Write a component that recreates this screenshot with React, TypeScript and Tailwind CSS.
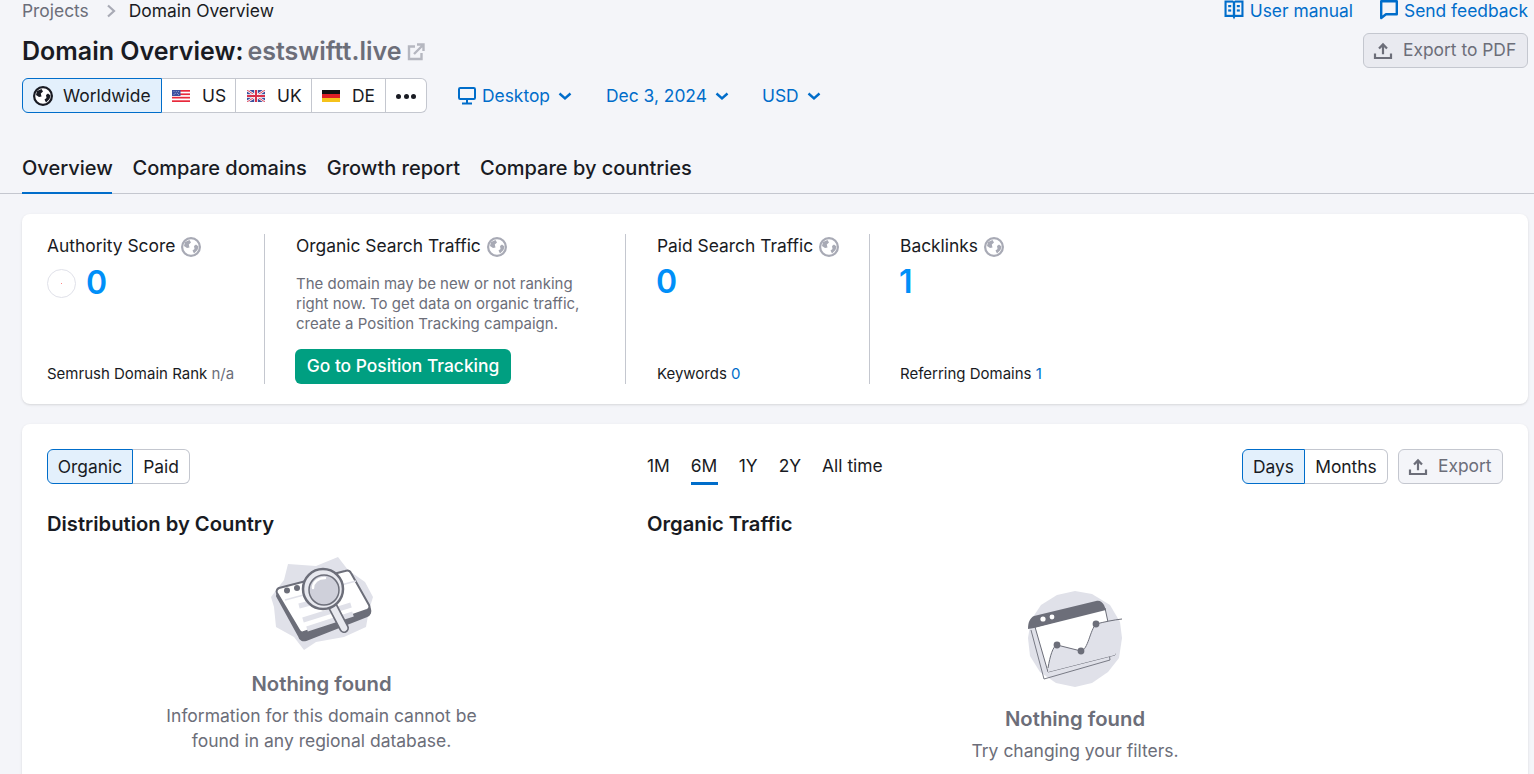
function GlobeIcon({ className }: { className: string }) {
    return (
        <svg viewBox="0 0 20 20" className={className} fill="none">
            <circle cx="10" cy="10" r="8.9" fill="#fff" stroke="currentColor" strokeWidth="2.2" />
            <path d="M4 5L8.5 3L10 5.5L7.8 7.5L8.5 10.5L6 11L3 9Z" fill="currentColor" />
            <path d="M13 9L15 7.5L17.5 9.5L16.5 13L13 16.5L11.5 13.5L13.5 12Z" fill="currentColor" />
        </svg>
    );
}

function UsFlag() {
    return (
        <svg viewBox="0 0 18 12" className="w-[18px] h-3">
            <rect width="18" height="12" fill="#fff" />
            <rect y="0" width="18" height="1.7" fill="#e8293b" />
            <rect y="3.4" width="18" height="1.7" fill="#e8293b" />
            <rect y="6.8" width="18" height="1.7" fill="#e8293b" />
            <rect y="10.3" width="18" height="1.7" fill="#e8293b" />
            <rect width="8.5" height="6" fill="#3c4fa0" />
            <circle cx="2" cy="1.6" r=".45" fill="#fff" />
            <circle cx="4.2" cy="1.6" r=".45" fill="#fff" />
            <circle cx="6.4" cy="1.6" r=".45" fill="#fff" />
            <circle cx="3.1" cy="3.2" r=".45" fill="#fff" />
            <circle cx="5.3" cy="3.2" r=".45" fill="#fff" />
            <circle cx="2" cy="4.6" r=".45" fill="#fff" />
            <circle cx="6.4" cy="4.6" r=".45" fill="#fff" />
        </svg>
    );
}

function UkFlag() {
    return (
        <svg viewBox="0 0 18 12" className="w-[18px] h-3">
            <rect width="18" height="12" fill="#3c4f9c" />
            <path d="M0 0L18 12M18 0L0 12" stroke="#fff" strokeWidth="2.4" />
            <path d="M0 0L18 12M18 0L0 12" stroke="#d9304a" strokeWidth="0.9" />
            <path d="M9 0V12M0 6H18" stroke="#fff" strokeWidth="3.6" />
            <path d="M9 0V12M0 6H18" stroke="#d9304a" strokeWidth="2" />
        </svg>
    );
}

function DeFlag() {
    return (
        <svg viewBox="0 0 18 12" className="w-[18px] h-3">
            <rect width="18" height="4" fill="#111" />
            <rect y="4" width="18" height="4" fill="#dd1f26" />
            <rect y="8" width="18" height="4" fill="#f5c21b" />
        </svg>
    );
}

function BookIcon() {
    return (
        <svg viewBox="0 0 20 20" className="w-5 h-5 -mt-0.5 text-[#006dca]">
            <path d="M0.5 0.5H9L10 1.5L11 0.5H19.5V17H11.2L10 19.5L8.8 17H0.5Z" fill="currentColor" />
            <rect x="2.6" y="2.6" width="6.2" height="12.2" fill="#f4f5f9" />
            <rect x="11.2" y="2.6" width="6.2" height="12.2" fill="#f4f5f9" />
            <rect x="4.2" y="5" width="3" height="2.2" fill="currentColor" />
            <rect x="4.2" y="9.4" width="3" height="2.2" fill="currentColor" />
            <rect x="12.8" y="5" width="3" height="2.2" fill="currentColor" />
            <rect x="12.8" y="9.4" width="3" height="2.2" fill="currentColor" />
        </svg>
    );
}

function FeedbackIcon() {
    return (
        <svg viewBox="0 0 18 20" className="w-[18px] h-5 -mt-0.5 text-[#006dca]" fill="none">
            <path d="M1.2 1.2H16.8V14.2H6L1.2 18Z" stroke="currentColor" strokeWidth="2.4" strokeLinejoin="round" />
        </svg>
    );
}

function UploadIcon() {
    return (
        <svg viewBox="0 0 20 20" className="w-5 h-5 text-[#6c6e79]" fill="none">
            <path d="M10 13.2V4M6 7.6L10 3.4L14 7.6" stroke="currentColor" strokeWidth="2.2" />
            <path d="M2 12.5V17H18V12.5" stroke="currentColor" strokeWidth="2.2" />
        </svg>
    );
}

function ExternalIcon() {
    return (
        <svg viewBox="0 0 18 18" className="w-[18px] h-[18px] text-[#b5b7c0]" fill="none">
            <path d="M8 3.5H2V16H14.5V10" stroke="currentColor" strokeWidth="2.4" />
            <path d="M7 11L15.5 2.5M10 1.5H16.5V8" stroke="currentColor" strokeWidth="2.4" />
        </svg>
    );
}

function DesktopIcon() {
    return (
        <svg viewBox="0 0 18 18" className="w-[18px] h-[18px] text-[#006dca]" fill="none">
            <rect x="1" y="1" width="16" height="11" rx="1.2" stroke="currentColor" strokeWidth="2" />
            <path d="M9 12V16M4 16.5H14" stroke="currentColor" strokeWidth="2" />
        </svg>
    );
}

function Chevron() {
    return (
        <svg viewBox="0 0 16 16" className="w-4 h-4 ml-[7px]" fill="none">
            <path d="M2.5 5.5L8 10.5L13.5 5.5" stroke="currentColor" strokeWidth="2.4" />
        </svg>
    );
}

function SearchIllustration() {
    return (
        <svg viewBox="0 0 112 104" className="w-[112px] h-[104px]" fill="none">
            <path d="M22 12L50 14L72 5L82 18L99 30L107 45L103 58L100 75L78 85L50 90L38 98L28 85L10 75L8 55L5 45L18 28Z" fill="#e0e1e9" />
            {/* window thickness */}
            <path d="M11 44L33 84C34 88 37 89 40 88L101 64C104 63 105 60 104 57L102 53L36 80L12 39Z" fill="#6c6e79" stroke="#6c6e79" strokeWidth="2" strokeLinejoin="round" />
            <path d="M13 36L79 19C82 18 84 19 85 21L103 53C104 55 103 57 101 58L38 80C36 81 34 80 33 78L11 41C10 39 11 37 13 36Z" fill="#fff" stroke="#6c6e79" strokeWidth="2" />
            <circle cx="21" cy="38.5" r="3" fill="#6c6e79" />
            <circle cx="31" cy="36" r="3" fill="#6c6e79" />
            <path d="M19 48L90 29" stroke="#e0e1e9" strokeWidth="1.5" />
            <path d="M33 54L52 49M37 68L85 53M41 77L87 62" stroke="#e0e1e9" strokeWidth="5" />
            <path d="M67 55L78 76" stroke="#6c6e79" strokeWidth="10" strokeLinecap="round" />
            <path d="M67 55L78 76" stroke="#e8e9ef" strokeWidth="6.5" strokeLinecap="round" />
            <circle cx="57" cy="37" r="20" fill="#e8e9ef" stroke="#6c6e79" strokeWidth="2.5" />
            <circle cx="58" cy="38" r="15" fill="#cfd0da" stroke="#6c6e79" strokeWidth="1.5" />
            <path d="M47 36C47 30 52 26 59 26" stroke="#fff" strokeWidth="2.5" strokeLinecap="round" />
        </svg>
    );
}

function ChartIllustration() {
    return (
        <svg viewBox="0 0 130 115" className="w-[130px] h-[115px]" fill="none">
            <path d="M65 11L82 14L100 25L110 42L112 58L109 78L98 92L82 103L65 107L46 103L30 92L20 76L18 58L21 40L31 25L47 15Z" fill="#e0e1e9" />
            <path d="M21 50L34 99L100 80L93 30" stroke="#6c6e79" strokeWidth="0.9" />
            <path d="M25 47L38 92L105 75L95 28Z" fill="#fff" stroke="#6c6e79" strokeWidth="1" />
            <path d="M38 88C40 76 43 66 47 65L71 71C78 70 80 50 86 44L105 40L105 75L38 92Z" fill="#e0e1e9" />
            <path d="M18 49C18 42 20 38 24 36L86 21C90 20 92 22 94 25L96 30L24 48Z" fill="#6c6e79" />
            <circle cx="33" cy="39" r="2.6" fill="#fff" />
            <circle cx="42" cy="37" r="2.4" fill="#fff" />
            <path d="M38 88C40 76 43 66 47 65L71 71C78 70 80 50 86 44C94 42 103 40 112 39" stroke="#6c6e79" strokeWidth="1" />
            <circle cx="47" cy="65" r="3.4" fill="#6c6e79" />
            <circle cx="71" cy="71" r="3.4" fill="#6c6e79" />
            <circle cx="86" cy="44" r="3.4" fill="#6c6e79" />
        </svg>
    );
}

function MetricTitle({ label }: { label: string }) {
    return (
        <div className="flex items-center gap-1.5 h-6 pt-px text-[17.4px] text-[#191b23]">
            {label}
            <GlobeIcon className="w-5 h-5 text-[#a8aab5]" />
        </div>
    );
}

function Segment({ children, active, className }: { children: React.ReactNode; active?: boolean; className: string }) {
    return (
        <div className={`flex items-center h-full pt-px text-[17.4px] text-[#191b23] ${active ? "bg-[#e3f0fc] border border-[#006dca]" : "bg-white border-y border-r border-[#c4c7cf]"} ${className}`}>
            {children}
        </div>
    );
}

function LinkSelect({ children, className }: { children: React.ReactNode; className: string }) {
    return (
        <div className={`flex items-center pt-0.5 text-[17.4px] text-[#006dca] ${className}`}>
            {children}
            <Chevron />
        </div>
    );
}

export default function App() {
    return (
        <div className="h-[774px] overflow-hidden bg-[#f4f5f9] font-['Inter',sans-serif]">
            {/* header */}
            <div className="flex justify-between pl-[22px] pr-1.5 h-[113px]">
                <div>
                    <div className="flex items-center h-[22px] text-[17.4px]">
                        <span className="text-[#6c6e79]">Projects</span>
                        <svg viewBox="0 0 10 14" className="w-2.5 h-3.5 ml-[17px] mr-[13px] text-[#a8aab5]" fill="none">
                            <path d="M2 1.5L8 7L2 12.5" stroke="currentColor" strokeWidth="2.2" />
                        </svg>
                        <span className="text-[#191b23]">Domain Overview</span>
                    </div>
                    <div className="flex items-center h-[34px] mt-3 pt-0.5 text-[25px] font-semibold text-[#191b23]">
                        Domain Overview:
                        <span className="ml-1 text-[#6c6e79]">estswiftt.live</span>
                        <span className="ml-1.5"><ExternalIcon /></span>
                    </div>
                    <div className="flex items-center h-[35px] mt-2.5">
                        <Segment active className="w-[140px] pl-[10px] gap-2.5 rounded-l-md">
                            <GlobeIcon className="w-5 h-5 text-[#191b23]" />
                            Worldwide
                        </Segment>
                        <Segment className="w-[74px] pl-[10px] gap-3"><UsFlag />US</Segment>
                        <Segment className="w-[76px] pl-[11px] gap-3"><UkFlag />UK</Segment>
                        <Segment className="w-[74px] pl-2.5 gap-3"><DeFlag />DE</Segment>
                        <Segment className="w-[41px] justify-center gap-[2.5px] rounded-r-md">
                            <span className="w-[5px] h-[5px] rounded-full bg-[#191b23]" />
                            <span className="w-[5px] h-[5px] rounded-full bg-[#191b23]" />
                            <span className="w-[5px] h-[5px] rounded-full bg-[#191b23]" />
                        </Segment>
                        <LinkSelect className="ml-[31px]">
                            <DesktopIcon />
                            <span className="ml-[6px]">Desktop</span>
                        </LinkSelect>
                        <LinkSelect className="ml-[33px]">Dec 3, 2024</LinkSelect>
                        <LinkSelect className="ml-8">USD</LinkSelect>
                    </div>
                </div>
                <div className="flex flex-col items-end">
                    <div className="flex items-center h-[22px] text-[17.4px] text-[#006dca]">
                        <BookIcon />
                        <span className="ml-1.5">User manual</span>
                        <span className="ml-[27px] flex"><FeedbackIcon /></span>
                        <span className="ml-1.5">Send feedback</span>
                    </div>
                    <div className="flex items-center w-[165px] h-[35px] mt-[11px] pl-[9px] gap-2.5 rounded-md border border-[#c4c7cf] bg-[#e9eaf0] text-[17.4px] text-[#6c6e79]">
                        <UploadIcon />
                        Export to PDF
                    </div>
                </div>
            </div>

            {/* tabs */}
            <div className="flex gap-5 h-[81px] pt-10 pl-[22px] border-b border-[#c4c7cf] text-[20px] text-[#191b23]">
                <div className="w-[90px] h-[41px] mr-[0.5px] border-b-2 border-[#006dca] font-medium">Overview</div>
                <div className="font-medium">Compare domains</div>
                <div className="font-medium">Growth report</div>
                <div className="font-medium">Compare by countries</div>
            </div>

            {/* metrics card */}
            <div className="flex h-[190px] mt-5 ml-[22px] mr-1.5 px-[25px] py-5 rounded-lg bg-white shadow-sm">
                <div className="flex flex-col w-[218px] border-r border-[#c4c7cf]">
                    <MetricTitle label="Authority Score" />
                    <div className="flex items-center mt-[5px] gap-2.5">
                        <div className="flex items-center justify-center w-[29px] h-[29px] rounded-full border border-[#e0e1e9]">
                            <span className="w-px h-px bg-[#ff8786]" />
                        </div>
                        <span className="text-[32px] leading-10 font-semibold text-[#008ff8]">0</span>
                    </div>
                    <div className="mt-auto text-[15px] leading-5 text-[#191b23]">
                        Semrush Domain Rank <span className="text-[#6c6e79]">n/a</span>
                    </div>
                </div>
                <div className="flex flex-col w-[361px] pl-[31px] border-r border-[#c4c7cf]">
                    <MetricTitle label="Organic Search Traffic" />
                    <p className="mt-4 w-[300px] text-[15px] leading-5 text-[#6c6e79]">
                        The domain may be new or not ranking right now. To get data on organic traffic, create a Position Tracking campaign.
                    </p>
                    <div className="flex items-center justify-center mt-auto -ml-px pb-px w-[216px] h-[35px] rounded-md bg-[#009f81] text-[17.4px] font-medium text-white">
                        Go to Position Tracking
                    </div>
                </div>
                <div className="flex flex-col w-[244px] pl-[31px] border-r border-[#c4c7cf]">
                    <MetricTitle label="Paid Search Traffic" />
                    <div className="mt-1 -ml-px text-[32px] leading-10 font-semibold text-[#008ff8]">0</div>
                    <div className="mt-auto text-[15px] leading-5 text-[#191b23]">
                        Keywords <span className="text-[#006dca]">0</span>
                    </div>
                </div>
                <div className="flex flex-col pl-[30px]">
                    <MetricTitle label="Backlinks" />
                    <div className="mt-1 -ml-px text-[32px] leading-10 font-semibold text-[#008ff8]">1</div>
                    <div className="mt-auto text-[15px] leading-5 text-[#191b23]">
                        Referring Domains <span className="text-[#006dca]">1</span>
                    </div>
                </div>
            </div>

            {/* traffic card */}
            <div className="ml-[22px] mr-1.5 mt-5 h-[400px] p-[25px] rounded-lg bg-white shadow-sm">
                <div className="flex h-[35px]">
                    <div className="flex w-[600px] h-full">
                        <Segment active className="w-[86px] justify-center rounded-l-md">Organic</Segment>
                        <Segment className="w-[57px] justify-center rounded-r-md">Paid</Segment>
                    </div>
                    <div className="flex flex-1 justify-between">
                        <div className="flex gap-[21px] text-[17.4px] leading-[26px] text-[#191b23]">
                            <div className="pt-1">1M</div>
                            <div className="pt-1 w-[27px] h-[36px] border-b-[3px] border-[#006dca]">6M</div>
                            <div className="pt-1">1Y</div>
                            <div className="pt-1">2Y</div>
                            <div className="pt-1">All time</div>
                        </div>
                        <div className="flex h-full">
                            <Segment active className="w-[63px] justify-center rounded-l-md">Days</Segment>
                            <Segment className="w-[83px] justify-center rounded-r-md">Months</Segment>
                            <div className="flex items-center w-[105px] h-full ml-2.5 pl-[9px] gap-2.5 rounded-md border border-[#c4c7cf] bg-[#f4f5f9] text-[17.4px] text-[#6c6e79]">
                                <UploadIcon />
                                Export
                            </div>
                        </div>
                    </div>
                </div>
                <div className="flex mt-[26px]">
                    <div className="w-[600px]">
                        <div className="text-[20.2px] leading-7 font-semibold text-[#191b23]">Distribution by Country</div>
                        <div className="flex flex-col items-center w-[549px] mt-3.5 text-center">
                            <SearchIllustration />
                            <div className="mt-4 text-[20.3px] leading-6 font-semibold text-[#6c6e79]">Nothing found</div>
                            <div className="mt-[7px] text-[17.5px] leading-[25px] text-[#6c6e79]">
                                Information for this domain cannot be<br />found in any regional database.
                            </div>
                        </div>
                    </div>
                    <div className="flex-1">
                        <div className="text-[20.2px] leading-7 font-semibold text-[#191b23]">Organic Traffic</div>
                        <div className="flex flex-col items-center mt-[42px] text-center">
                            <ChartIllustration />
                            <div className="mt-3 text-[20.3px] leading-6 font-semibold text-[#6c6e79]">Nothing found</div>
                            <div className="mt-2 text-[17.5px] leading-6 text-[#6c6e79]">Try changing your filters.</div>
                        </div>
                    </div>
                </div>
            </div>
        </div>
    );
}
